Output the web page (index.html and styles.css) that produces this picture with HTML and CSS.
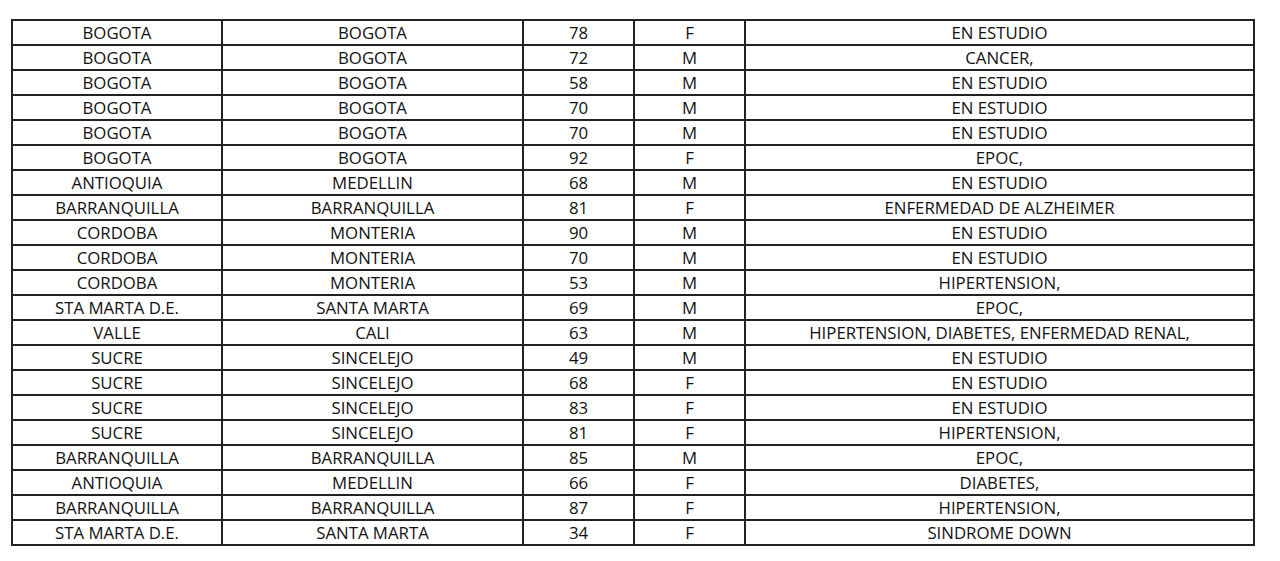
FILE: index.html
```html
<!DOCTYPE html>
<html>
<head>
<meta charset="utf-8">
<link rel="stylesheet" href="styles.css">
</head>
<body>
<table class="data">
<colgroup>
<col class="c1"><col class="c2"><col class="c3"><col class="c4"><col class="c5">
</colgroup>
<tbody>
<tr><td>BOGOTA</td><td>BOGOTA</td><td>78</td><td>F</td><td>EN ESTUDIO</td></tr>
<tr><td>BOGOTA</td><td>BOGOTA</td><td>72</td><td>M</td><td>CANCER,</td></tr>
<tr><td>BOGOTA</td><td>BOGOTA</td><td>58</td><td>M</td><td>EN ESTUDIO</td></tr>
<tr><td>BOGOTA</td><td>BOGOTA</td><td>70</td><td>M</td><td>EN ESTUDIO</td></tr>
<tr><td>BOGOTA</td><td>BOGOTA</td><td>70</td><td>M</td><td>EN ESTUDIO</td></tr>
<tr><td>BOGOTA</td><td>BOGOTA</td><td>92</td><td>F</td><td>EPOC,</td></tr>
<tr><td>ANTIOQUIA</td><td>MEDELLIN</td><td>68</td><td>M</td><td>EN ESTUDIO</td></tr>
<tr><td>BARRANQUILLA</td><td>BARRANQUILLA</td><td>81</td><td>F</td><td>ENFERMEDAD DE ALZHEIMER</td></tr>
<tr><td>CORDOBA</td><td>MONTERIA</td><td>90</td><td>M</td><td>EN ESTUDIO</td></tr>
<tr><td>CORDOBA</td><td>MONTERIA</td><td>70</td><td>M</td><td>EN ESTUDIO</td></tr>
<tr><td>CORDOBA</td><td>MONTERIA</td><td>53</td><td>M</td><td>HIPERTENSION,</td></tr>
<tr><td>STA MARTA D.E.</td><td>SANTA MARTA</td><td>69</td><td>M</td><td>EPOC,</td></tr>
<tr><td>VALLE</td><td>CALI</td><td>63</td><td>M</td><td>HIPERTENSION, DIABETES, ENFERMEDAD RENAL,</td></tr>
<tr><td>SUCRE</td><td>SINCELEJO</td><td>49</td><td>M</td><td>EN ESTUDIO</td></tr>
<tr><td>SUCRE</td><td>SINCELEJO</td><td>68</td><td>F</td><td>EN ESTUDIO</td></tr>
<tr><td>SUCRE</td><td>SINCELEJO</td><td>83</td><td>F</td><td>EN ESTUDIO</td></tr>
<tr><td>SUCRE</td><td>SINCELEJO</td><td>81</td><td>F</td><td>HIPERTENSION,</td></tr>
<tr><td>BARRANQUILLA</td><td>BARRANQUILLA</td><td>85</td><td>M</td><td>EPOC,</td></tr>
<tr><td>ANTIOQUIA</td><td>MEDELLIN</td><td>66</td><td>F</td><td>DIABETES,</td></tr>
<tr><td>BARRANQUILLA</td><td>BARRANQUILLA</td><td>87</td><td>F</td><td>HIPERTENSION,</td></tr>
<tr><td>STA MARTA D.E.</td><td>SANTA MARTA</td><td>34</td><td>F</td><td>SINDROME DOWN</td></tr>
</tbody>
</table>
</body>
</html>
```
FILE: styles.css
```css
html, body {
  margin: 0;
  padding: 0;
  background: #ffffff;
}
body {
  padding: 19px 0 0 11px;
  font-family: "Open Sans", "Liberation Sans", sans-serif;
  font-size: 16.8px;
  color: #111111;
}
.data {
  border-collapse: collapse;
  table-layout: fixed;
  width: 1242px;
}
.c1 { width: 210px; }
.c2 { width: 301px; }
.c3 { width: 111px; }
.c4 { width: 111px; }
.c5 { width: 509px; }
.data td {
  border: 2px solid #222222;
  height: 22px;
  padding: 1px 0 0 0;
  text-align: center;
  vertical-align: middle;
  line-height: 22px;
  white-space: nowrap;
}
```
